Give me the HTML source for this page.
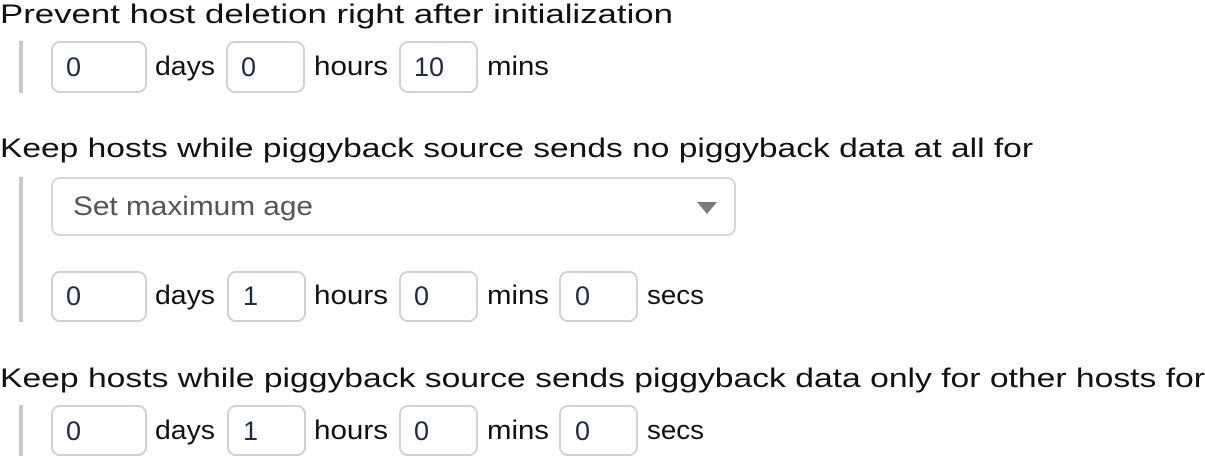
<!DOCTYPE html>
<html><head><style>
html,body{margin:0;padding:0;background:#fff;width:1205px;height:457px;overflow:hidden}
svg{display:block}
text{font-family:"Liberation Sans",sans-serif;font-size:27px;fill:#111}
.v{fill:#1e2a4a}
.in{fill:#fff;stroke:#cdd0e0;stroke-width:2}
</style></head><body>
<svg width="1205" height="457" viewBox="0 0 1205 457">
<text x="0" y="23" textLength="673" lengthAdjust="spacingAndGlyphs">Prevent host deletion right after initialization</text>
<rect x="19" y="41" width="4" height="52" fill="#cacaca"/>
<rect class="in" x="52" y="42" width="94" height="50" rx="8"/>
<text class="v" x="66" y="76">0</text>
<text x="155" y="75" textLength="60" lengthAdjust="spacingAndGlyphs">days</text>
<rect class="in" x="227" y="42" width="77" height="50" rx="8"/>
<text class="v" x="241" y="76">0</text>
<text x="314" y="75" textLength="74" lengthAdjust="spacingAndGlyphs">hours</text>
<rect class="in" x="400" y="42" width="77" height="50" rx="8"/>
<text class="v" x="414" y="76">10</text>
<text x="487" y="75" textLength="62" lengthAdjust="spacingAndGlyphs">mins</text>

<text x="0" y="157" textLength="1033" lengthAdjust="spacingAndGlyphs">Keep hosts while piggyback source sends no piggyback data at all for</text>
<rect x="19" y="177" width="4" height="145" fill="#cacaca"/>
<rect x="52" y="178" width="683" height="57" rx="8" fill="#fff" stroke="#d6d6d6" stroke-width="2"/>
<text x="73" y="215" style="fill:#555" textLength="240" lengthAdjust="spacingAndGlyphs">Set maximum age</text>
<polygon points="697,202 717,202 707,214" fill="#7a7a7a"/>

<rect class="in" x="52" y="272" width="94" height="49" rx="8"/>
<text class="v" x="66" y="305">0</text>
<text x="155" y="304" textLength="60" lengthAdjust="spacingAndGlyphs">days</text>
<rect class="in" x="228" y="272" width="77" height="49" rx="8"/>
<text class="v" x="243" y="305">1</text>
<text x="314" y="304" textLength="74" lengthAdjust="spacingAndGlyphs">hours</text>
<rect class="in" x="400" y="272" width="77" height="49" rx="8"/>
<text class="v" x="414" y="305">0</text>
<text x="487" y="304" textLength="62" lengthAdjust="spacingAndGlyphs">mins</text>
<rect class="in" x="560" y="272" width="77" height="49" rx="8"/>
<text class="v" x="575" y="305">0</text>
<text x="647" y="304" textLength="57" lengthAdjust="spacingAndGlyphs">secs</text>

<text x="0" y="387" textLength="1205" lengthAdjust="spacingAndGlyphs">Keep hosts while piggyback source sends piggyback data only for other hosts for</text>
<rect x="19" y="405" width="4" height="51" fill="#cacaca"/>
<rect class="in" x="52" y="406" width="94" height="49" rx="8"/>
<text class="v" x="66" y="440">0</text>
<text x="155" y="439" textLength="60" lengthAdjust="spacingAndGlyphs">days</text>
<rect class="in" x="228" y="406" width="77" height="49" rx="8"/>
<text class="v" x="243" y="440">1</text>
<text x="314" y="439" textLength="74" lengthAdjust="spacingAndGlyphs">hours</text>
<rect class="in" x="400" y="406" width="77" height="49" rx="8"/>
<text class="v" x="414" y="440">0</text>
<text x="487" y="439" textLength="62" lengthAdjust="spacingAndGlyphs">mins</text>
<rect class="in" x="560" y="406" width="77" height="49" rx="8"/>
<text class="v" x="575" y="440">0</text>
<text x="647" y="439" textLength="57" lengthAdjust="spacingAndGlyphs">secs</text>
</svg>
</body></html>
